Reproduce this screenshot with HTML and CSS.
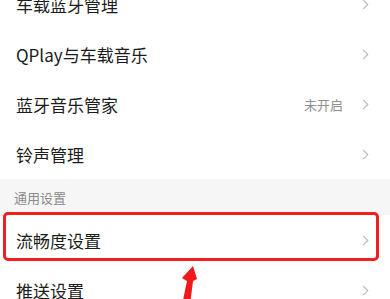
FILE: index.html
```html
<!DOCTYPE html>
<html lang="zh">
<head>
<meta charset="utf-8">
<link rel="stylesheet" href="styles.css">
</head>
<body>
<div class="page">
  <div class="list">
    <div class="row"><span class="label">车载蓝牙管理</span><span class="right"><svg class="chev" viewBox="0 0 7 12"><polyline points="1,1 6,6 1,11"/></svg></span></div>
    <div class="row"><span class="label">QPlay与车载音乐</span><span class="right"><svg class="chev" viewBox="0 0 7 12"><polyline points="1,1 6,6 1,11"/></svg></span></div>
    <div class="row"><span class="label">蓝牙音乐管家</span><span class="right"><span class="value">未开启</span><svg class="chev" viewBox="0 0 7 12"><polyline points="1,1 6,6 1,11"/></svg></span></div>
    <div class="row"><span class="label">铃声管理</span><span class="right"><svg class="chev" viewBox="0 0 7 12"><polyline points="1,1 6,6 1,11"/></svg></span></div>
  </div>
  <div class="section">通用设置</div>
  <div class="list">
    <div class="row highlighted"><span class="label">流畅度设置</span><span class="right"><svg class="chev" viewBox="0 0 7 12"><polyline points="1,1 6,6 1,11"/></svg></span><span class="mark"></span></div>
    <div class="row"><span class="label">推送设置</span><span class="right"><svg class="chev" viewBox="0 0 7 12"><polyline points="1,1 6,6 1,11"/></svg></span></div>
  </div>
  <svg class="arrow" viewBox="0 0 40 40" width="40" height="40">
    <polygon points="19,1 23,14 19,16 16,40 8,40 13,16 8,13" fill="#f01818"/>
  </svg>
</div>
</body>
</html>
```
FILE: styles.css
```css
html, body {
  margin: 0;
  padding: 0;
  background: #ffffff;
}
.page {
  position: relative;
  width: 390px;
  height: 299px;
  overflow: hidden;
  font-family: "Noto Sans CJK SC", "Noto Sans", sans-serif;
  color: #1c1c1c;
}
.list:first-child {
  margin-top: -21px;
}
.row {
  position: relative;
  height: 50px;
  display: flex;
  align-items: center;
  justify-content: space-between;
  padding: 0 21px 0 16px;
  background: #ffffff;
}
.label {
  font-size: 17px;
  line-height: 1;
}
.right {
  display: flex;
  align-items: center;
  gap: 19px;
}
.value {
  font-size: 13px;
  color: #8f8f8f;
}
.chev {
  width: 7px;
  height: 11px;
  fill: none;
  stroke: #b8b8b8;
  stroke-width: 1.2;
}
.section {
  height: 36px;
  background: #f6f6f6;
  display: flex;
  align-items: center;
  padding-left: 14px;
  font-size: 13px;
  color: #8a8a8a;
}
.mark {
  position: absolute;
  left: 3px;
  right: 11px;
  top: -3px;
  bottom: 4px;
  border: 3px solid #f31e1e;
  border-radius: 5px;
}
.arrow {
  position: absolute;
  left: 174px;
  top: 265px;
}
```
